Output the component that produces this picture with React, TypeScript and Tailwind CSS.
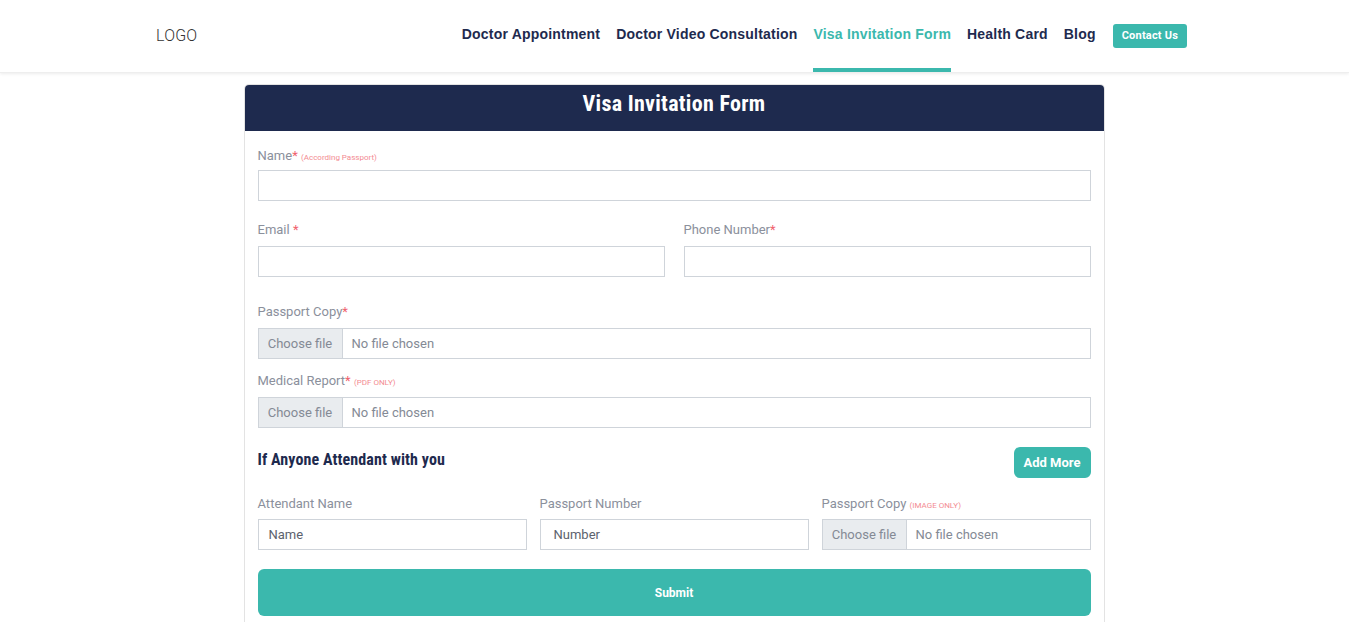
import React from "react";

const labelCls = "text-[13px] text-[#8b909c] leading-none";
const star = <span className="text-[#f0616d]">*</span>;

function FileInput({ className = "" }: { className?: string }) {
  return (
    <div className={`flex h-[31px] border border-[#cfd4da] text-[13px] text-[#848a95] ${className}`}>
      <div className="w-[84px] shrink-0 bg-[#e9ecef] border-r border-[#cfd4da] flex items-center justify-center">Choose file</div>
      <div className="flex items-center pl-[9px]">No file chosen</div>
    </div>
  );
}

export default function App() {
  return (
    <div className="min-h-screen bg-white" style={{ fontFamily: "Roboto, 'Liberation Sans', sans-serif" }}>
      <header className="h-[73px] bg-white shadow-[0_1px_3px_rgba(0,0,0,0.08)] border-b border-[#eeeeee] relative z-10">
        <div className="flex items-center h-full pl-[156px] pr-[162px]">
          <div className="text-[16px] text-[#333] font-light tracking-[0.2px]">LOGO</div>
          <nav className="ml-auto flex items-stretch h-full gap-[16px]" style={{ fontFamily: "'Liberation Sans', Arial, sans-serif" }}>
            {[
              "Doctor Appointment",
              "Doctor Video Consultation",
              "Visa Invitation Form",
              "Health Card",
              "Blog",
            ].map((t) => {
              const active = t === "Visa Invitation Form";
              return (
                <a
                  key={t}
                  className={`relative flex items-start pt-[24px] text-[14px] leading-[20px] font-bold tracking-[0.2px] ${active ? "text-[#3bb8ad]" : "text-[#1e2a4e]"}`}
                >
                  {t}
                  {active && <span className="absolute left-0 right-0 bottom-0 h-[4px] bg-[#3bb8ad]" />}
                </a>
              );
            })}
            <div className="flex items-start pt-[24px] ml-[1px]">
              <button className="h-[24px] px-[9px] rounded-[3px] bg-[#3bb8ad] text-white text-[11px] font-bold tracking-[0.2px]" style={{ fontFamily: "Roboto, sans-serif" }}>
                Contact Us
              </button>
            </div>
          </nav>
        </div>
      </header>

      <main className="flex justify-center pt-[11px]">
        <div className="w-[861px] -ml-[1px] border border-[#e3e3e3] border-b-0 rounded-t-[5px]">
          <div className="h-[46px] bg-[#1e2a4e] rounded-t-[4px] flex items-start justify-center pt-[2px]">
            <h1 className="text-white text-[22px] font-bold tracking-[0.3px]" style={{ fontFamily: "'Roboto Condensed', 'Liberation Sans Narrow', Roboto, sans-serif" }}>
              Visa Invitation Form
            </h1>
          </div>
          <div className="px-[13px] pt-[18px] pb-[6px]">
            <div className={labelCls}>
              Name{star} <span className="text-[8px] text-[#f38b92]">(According Passport)</span>
            </div>
            <input className="mt-[8px] block w-full h-[31px] border border-[#cfd4da] outline-none" />

            <div className="mt-[22px] grid grid-cols-2 gap-x-[19px]">
              <div>
                <div className={labelCls}>Email {star}</div>
                <input className="mt-[10px] block w-full h-[31px] border border-[#cfd4da] outline-none" />
              </div>
              <div>
                <div className={labelCls}>Phone Number{star}</div>
                <input className="mt-[10px] block w-full h-[31px] border border-[#cfd4da] outline-none" />
              </div>
            </div>

            <div className="mt-[28px]">
              <div className={labelCls}>Passport Copy{star}</div>
              <FileInput className="mt-[10px]" />
            </div>

            <div className="mt-[15px]">
              <div className={labelCls}>
                Medical Report{star} <span className="text-[8px] text-[#f38b92]">(PDF ONLY)</span>
              </div>
              <FileInput className="mt-[10px]" />
            </div>

            <div className="mt-[19px] flex items-center justify-between">
              <h2 className="text-[16px] font-bold text-[#1e2a4e] tracking-[0.1px] -mt-[6px]" style={{ fontFamily: "'Roboto Condensed', 'Liberation Sans Narrow', Roboto, sans-serif" }}>
                If Anyone Attendant with you
              </h2>
              <button className="h-[31px] px-[10px] rounded-[6px] bg-[#3bb8ad] text-white text-[13px] font-bold">Add More</button>
            </div>

            <div className="mt-[19px] grid grid-cols-3 gap-x-[13px]">
              <div>
                <div className={labelCls}>Attendant Name</div>
                <div className="mt-[9px] h-[31px] border border-[#cfd4da] flex items-center pl-[10px] text-[13px] text-[#5c626d]">Name</div>
              </div>
              <div>
                <div className={labelCls}>Passport Number</div>
                <div className="mt-[9px] h-[31px] border border-[#cfd4da] flex items-center pl-[13px] text-[13px] text-[#5c626d]">Number</div>
              </div>
              <div>
                <div className={labelCls}>
                  Passport Copy <span className="text-[8px] text-[#f38b92]">(IMAGE ONLY)</span>
                </div>
                <div className="mt-[9px] flex h-[31px] border border-[#cfd4da] text-[13px] text-[#848a95]">
                  <div className="w-[84px] shrink-0 bg-[#e9ecef] border-r border-[#cfd4da] flex items-center justify-center">Choose file</div>
                  <div className="flex items-center pl-[9px]">No file chosen</div>
                </div>
              </div>
            </div>

            <button className="mt-[19px] w-full h-[47px] rounded-[6px] bg-[#3bb8ad] text-white text-[12px] font-bold">Submit</button>
          </div>
        </div>
      </main>
    </div>
  );
}
